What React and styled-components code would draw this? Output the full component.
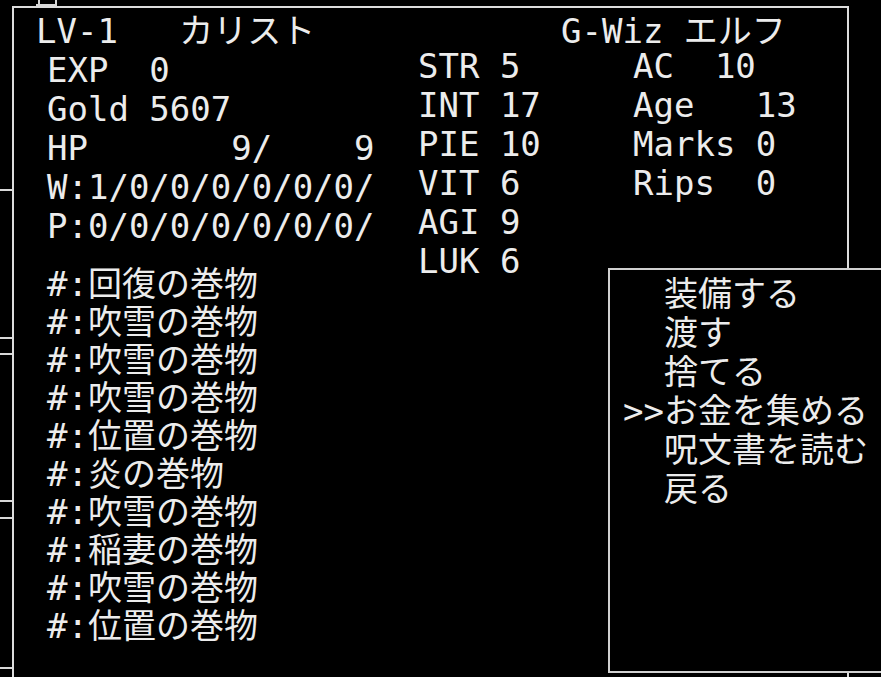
import React from "react";
import styled, { createGlobalStyle } from "styled-components";

const GlobalStyle = createGlobalStyle`
  html, body {
    margin: 0;
    padding: 0;
    background: #000;
    overflow: hidden;
  }
`;

const Screen = styled.div`
  position: relative;
  width: 881px;
  height: 677px;
  background: #000;
  color: #ececec;
  font-family: "DejaVu Sans Mono", "Noto Sans CJK JP", monospace;
  font-size: 34px;
  line-height: 39px;
  white-space: pre;
  overflow: hidden;
`;

const BackWindow = styled.div`
  position: absolute;
  left: -20px;
  width: 60px;
  top: ${({ top }) => top}px;
  height: ${({ h }) => h}px;
  border: 2px solid #d8d8d8;
  box-sizing: border-box;
`;

// bottom-right corner of a window lying above the screen edge
const CornerMark = styled.div`
  position: absolute;
  left: 36px;
  top: -20px;
  width: 21px;
  height: 26px;
  box-sizing: border-box;
  border-right: 2px solid #d8d8d8;
  border-bottom: 2px solid #d8d8d8;
`;

const StatusWindow = styled.section`
  position: absolute;
  left: 12px;
  top: 6px;
  width: 837px;
  height: 720px;
  box-sizing: border-box;
  border: 2px solid #dcdcdc;
  background: #000;
  padding: 7px 0 0 22px;
`;

const Header = styled.div`
  display: flex;
  line-height: 32px;
  height: 32px;
`;

const Title = styled.span`
  width: ${({ w }) => (w ? `${w}px` : "auto")};
`;

const Body = styled.div`
  display: grid;
  grid-template-columns: 371px 215px auto;
  padding-left: 11px;
  align-items: start;
`;

const Column = styled.div`
  display: flex;
  flex-direction: column;
  margin-top: ${({ drop }) => (drop ? `${drop}px` : "0")};
`;

const Line = styled.div`
  height: 39px;
`;

const ItemList = styled.div`
  display: flex;
  flex-direction: column;
  margin-top: 19px;
`;

const Item = styled.div`
  line-height: 38px;
  height: 38px;
`;

const CommandMenu = styled.nav`
  position: absolute;
  left: 608px;
  top: 268px;
  width: 300px;
  height: 405px;
  box-sizing: border-box;
  border: 2px solid #d0d0d0;
  background: #000;
  padding: 5px 0 0 13px;
  display: flex;
  flex-direction: column;
`;

const Command = styled.div`
  height: 39px;
`;

const stats = ["EXP  0", "Gold 5607", "HP       9/    9", "W:1/0/0/0/0/0/0/", "P:0/0/0/0/0/0/0/"];
const attrs = ["STR 5", "INT 17", "PIE 10", "VIT 6", "AGI 9", "LUK 6"];
const misc = ["AC  10", "Age   13", "Marks 0", "Rips  0"];
const items = [
  "回復の巻物",
  "吹雪の巻物",
  "吹雪の巻物",
  "吹雪の巻物",
  "位置の巻物",
  "炎の巻物",
  "吹雪の巻物",
  "稲妻の巻物",
  "吹雪の巻物",
  "位置の巻物",
];
const commands = ["装備する", "渡す", "捨てる", "お金を集める", "呪文書を読む", "戻る"];
const selected = 3;

const backWindows = [
  { top: -20, h: 211 },
  { top: 189, h: 150 },
  { top: 353, h: 149 },
  { top: 517, h: 152 },
];

export default function App() {
  return (
    <Screen>
      <GlobalStyle />
      <CornerMark />
      {backWindows.map((b, i) => (
        <BackWindow key={i} top={b.top} h={b.h} />
      ))}
      <StatusWindow>
        <Header>
          <Title w={525}>LV-1   カリスト</Title>
          <Title>G-Wiz エルフ</Title>
        </Header>
        <Body>
          <Column drop={4}>
            {stats.map((s) => (
              <Line key={s}>{s}</Line>
            ))}
            <ItemList>
              {items.map((it, i) => (
                <Item key={i}>#:{it}</Item>
              ))}
            </ItemList>
          </Column>
          <Column>
            {attrs.map((s) => (
              <Line key={s}>{s}</Line>
            ))}
          </Column>
          <Column>
            {misc.map((s) => (
              <Line key={s}>{s}</Line>
            ))}
          </Column>
        </Body>
      </StatusWindow>
      <CommandMenu>
        {commands.map((c, i) => (
          <Command key={c}>
            {i === selected ? ">>" : "  "}
            {c}
          </Command>
        ))}
      </CommandMenu>
    </Screen>
  );
}
